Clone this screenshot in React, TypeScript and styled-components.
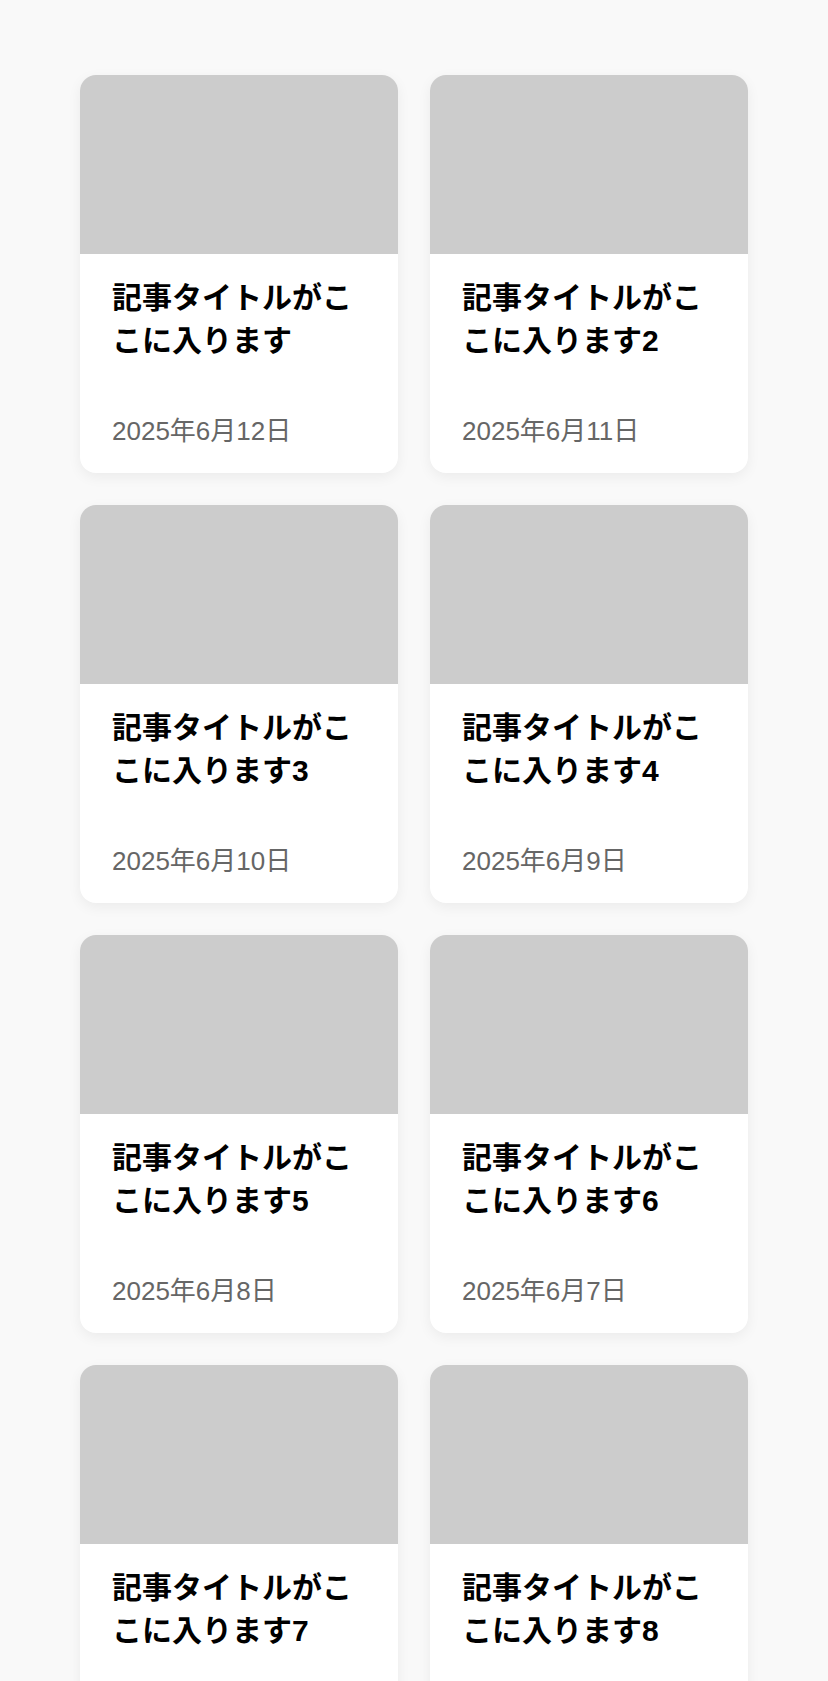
import React from "react";
import styled, { createGlobalStyle } from "styled-components";

interface Post {
  id: number;
  title: string;
  date: string;
}

const posts: Post[] = [
  { id: 1, title: "記事タイトルがここに入ります", date: "2025年6月12日" },
  { id: 2, title: "記事タイトルがここに入ります2", date: "2025年6月11日" },
  { id: 3, title: "記事タイトルがここに入ります3", date: "2025年6月10日" },
  { id: 4, title: "記事タイトルがここに入ります4", date: "2025年6月9日" },
  { id: 5, title: "記事タイトルがここに入ります5", date: "2025年6月8日" },
  { id: 6, title: "記事タイトルがここに入ります6", date: "2025年6月7日" },
  { id: 7, title: "記事タイトルがここに入ります7", date: "2025年6月6日" },
  { id: 8, title: "記事タイトルがここに入ります8", date: "2025年6月5日" },
];

const App = () => {
  return (
    <>
      <GlobalStyle />
      <Page>
        <Grid>
          {posts.map(post => (
            <Card key={post.id}>
              <Thumb />
              <Body>
                <Title>{post.title}</Title>
                <Date>{post.date}</Date>
              </Body>
            </Card>
          ))}
        </Grid>
      </Page>
    </>
  );
};

export default App;

const GlobalStyle = createGlobalStyle`
  html, body {
    margin: 0;
    padding: 0;
    background-color: #f9f9f9;
  }

  body {
    font-family: "Liberation Sans", "Noto Sans CJK JP", sans-serif;
    color: #000;
  }

  * {
    box-sizing: border-box;
  }
`;

const Page = styled.main`
  padding: 75px 80px 0;
  height: 1681px;
  overflow: hidden;
`;

const Grid = styled.div`
  display: grid;
  grid-template-columns: repeat(2, 1fr);
  gap: 32px;
`;

const Card = styled.article`
  display: flex;
  flex-direction: column;
  height: 398px;
  background-color: #fff;
  border-radius: 16px;
  overflow: hidden;
  box-shadow: 0 4px 14px rgba(0, 0, 0, 0.06);
`;

const Thumb = styled.div`
  height: 179px;
  background-color: #cccccc;
`;

const Body = styled.div`
  display: flex;
  flex-direction: column;
  flex-grow: 1;
  padding: 22px 32px 22px;
`;

const Title = styled.h2`
  margin: 0;
  font-size: 30px;
  line-height: 43px;
  font-weight: 700;
`;

const Date = styled.p`
  margin: auto 0 0;
  font-size: 26px;
  line-height: 39px;
  color: #666;
`;
